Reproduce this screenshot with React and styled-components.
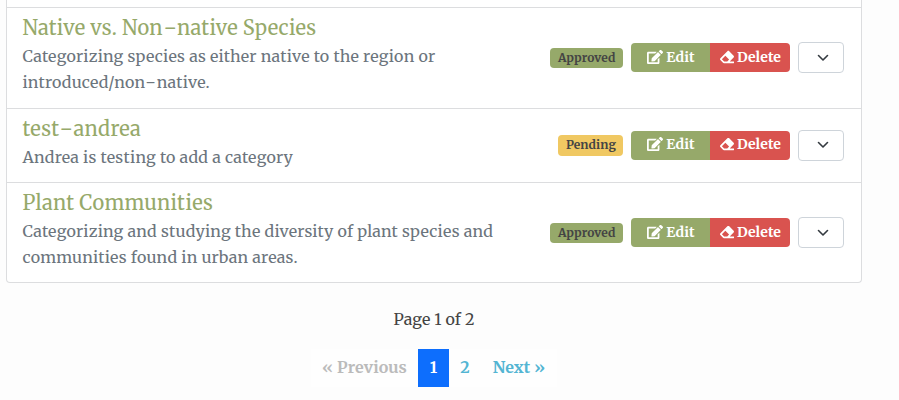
import React from "react";
import styled, { createGlobalStyle } from "styled-components";
import { FaEdit, FaEraser } from "react-icons/fa";

const GlobalStyle = createGlobalStyle`
  *, *::before, *::after { box-sizing: border-box; }
  body {
    margin: 0;
    background: #fdfdfd;
    color: #444;
    font-family: Merriweather, "DejaVu Serif Condensed", "DejaVu Serif", serif;
    overflow: hidden;
  }
  button { font: inherit; cursor: pointer; }
`;

const Page = styled.main`
  width: 899px;
  height: 400px;
  overflow: hidden;
`;

const List = styled.ul`
  width: 856px;
  margin: 0 0 0 6px;
  padding: 7px 0 0;
  list-style: none;
  background: #fff;
  border: 1px solid #dcdddf;
  border-top: 0;
  border-radius: 0 0 4px 4px;
`;

const Row = styled.li`
  display: flex;
  align-items: center;
  height: ${(p) => p.$height}px;
  padding: 0 17px 0 15.5px;
  border-top: 1px solid #dcdddf;
`;

const Info = styled.div`
  flex: 1;
  align-self: flex-start;
  min-width: 0;
  padding-top: 5px;
  white-space: nowrap;
`;

const Title = styled.h2`
  margin: 0;
  font-size: 20px;
  font-weight: 400;
  line-height: 30px;
  letter-spacing: ${(p) => p.$track}px;
  color: #96a96a;
`;

const Line = styled.div`
  font-size: 16px;
  line-height: 26px;
  letter-spacing: 0.21px;
  color: #6c757d;
`;

const Dash = styled.span`
  display: inline-block;
  padding: 0 0.065em;
  line-height: 1;
  letter-spacing: 0;
  transform: scaleX(1.2);
`;

const Actions = styled.div`
  display: flex;
  align-items: center;
  gap: 8px;
  margin-top: ${(p) => p.$shift}px;
`;

const Badge = styled.span`
  width: ${(p) => (p.$pending ? 65 : 73)}px;
  height: ${(p) => (p.$pending ? 21 : 20)}px;
  padding-left: ${(p) => (p.$pending ? 1 : 0.5)}px;
  border-radius: 4px;
  background: ${(p) => (p.$pending ? "#f0c862" : "#96a96a")};
  color: #444;
  font-size: 12px;
  font-weight: 700;
  line-height: 20px;
  letter-spacing: 0.1px;
  text-align: center;
  white-space: nowrap;
`;

const ButtonGroup = styled.div`
  display: flex;
  border-radius: 4px;
  overflow: hidden;
`;

const Button = styled.button`
  display: flex;
  align-items: center;
  justify-content: center;
  gap: 3px;
  width: ${(p) => (p.$danger ? 80 : 79)}px;
  height: 29px;
  padding: 0 0 2px 1px;
  border: 0;
  background: ${(p) => (p.$danger ? "#d9534f" : "#96a96a")};
  color: #fff;
  font-size: 14px;
  font-weight: 700;
  letter-spacing: 0.1px;
`;

const Toggle = styled.button`
  display: flex;
  align-items: center;
  justify-content: center;
  width: 46px;
  height: 31px;
  padding: 0 0 0 4px;
  border: 1px solid #ced4da;
  border-radius: 4px;
  background: #fff;
  color: #343a40;
`;

const PageInfo = styled.p`
  width: 856px;
  margin: 23px 0 0 6px;
  font-size: 16px;
  line-height: 26px;
  letter-spacing: 0.1px;
  text-align: center;
`;

const Pagination = styled.nav`
  display: flex;
  width: 246px;
  height: 38px;
  margin: 17px 0 0 311px;
  background: #fefefe;
`;

const PageLink = styled.a`
  width: ${(p) => p.$width}px;
  background: ${(p) => (p.$active ? "#0d6efd" : "transparent")};
  color: ${(p) => (p.$active ? "#fff" : p.$disabled ? "#bbb" : "#53b5d3")};
  font-size: 16px;
  font-weight: 700;
  line-height: 37px;
  letter-spacing: ${(p) => (p.$disabled ? 0.08 : 0)}px;
  text-align: center;
  white-space: nowrap;
`;

const categories = [
  {
    title: "Native vs. Non-native Species",
    track: 0.2,
    height: 101,
    shift: -1,
    lines: ["Categorizing species as either native to the region or", "introduced/non-native."],
  },
  {
    title: "test-andrea",
    track: 0.3,
    height: 74,
    shift: -1,
    pending: true,
    lines: ["Andrea is testing to add a category"],
  },
  {
    title: "Plant Communities",
    track: 0.31,
    height: 100,
    shift: 0,
    lines: ["Categorizing and studying the diversity of plant species and", "communities found in urban areas."],
  },
];

const withDashes = (text) =>
  text.split("-").map((part, i) => (
    <React.Fragment key={i}>
      {i > 0 && <Dash>-</Dash>}
      {part}
    </React.Fragment>
  ));

const Chevron = () => (
  <svg width="12" height="8" viewBox="0 0 12 8" fill="none" aria-hidden="true">
    <path d="M1.5 1.5 6 6l4.5-4.5" stroke="currentColor" strokeWidth="1.6" strokeLinecap="round" strokeLinejoin="round" />
  </svg>
);

export default function App() {
  return (
    <Page>
      <GlobalStyle />
      <List>
        {categories.map((c) => (
          <Row key={c.title} $height={c.height}>
            <Info>
              <Title $track={c.track}>{withDashes(c.title)}</Title>
              {c.lines.map((text) => (
                <Line key={text}>{withDashes(text)}</Line>
              ))}
            </Info>
            <Actions $shift={c.shift}>
              <Badge $pending={c.pending}>{c.pending ? "Pending" : "Approved"}</Badge>
              <ButtonGroup>
                <Button><FaEdit size={16} />Edit</Button>
                <Button $danger><FaEraser size={14} />Delete</Button>
              </ButtonGroup>
              <Toggle aria-label="More actions"><Chevron /></Toggle>
            </Actions>
          </Row>
        ))}
      </List>
      <PageInfo>Page 1 of 2</PageInfo>
      <Pagination>
        <PageLink $width={107} $disabled>« Previous</PageLink>
        <PageLink $width={31} $active>1</PageLink>
        <PageLink $width={32}>2</PageLink>
        <PageLink $width={76}>Next »</PageLink>
      </Pagination>
    </Page>
  );
}
